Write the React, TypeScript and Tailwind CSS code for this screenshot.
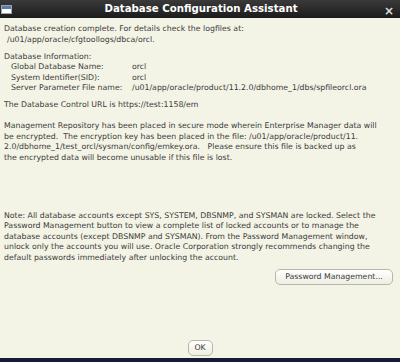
import React from "react";

const Line: React.FC<{ children: React.ReactNode; className?: string }> = ({
  children,
  className = "",
}) => (
  <div className={`h-[10.5px] leading-[10.5px] whitespace-pre ${className}`}>
    {children}
  </div>
);

const InfoRow: React.FC<{ label: string; value: string }> = ({ label, value }) => (
  <div className="flex h-[10.5px] leading-[10.5px] whitespace-pre">
    <span className="w-[128px] shrink-0 pl-[7px]">{label}</span>
    <span>{value}</span>
  </div>
);

const App: React.FC = () => {
  return (
    <div
      className="flex h-[362px] w-[400px] flex-col overflow-hidden bg-[#f4f4e6] text-[7.8px] text-[#3a3a3a]"
      style={{ fontFamily: '"DejaVu Sans", sans-serif' }}
    >
      {/* title bar */}
      <div className="relative flex h-[18px] shrink-0 items-center justify-center bg-gradient-to-b from-[#3a3a3a] to-[#1c1c1c]">
        <div className="absolute left-[1px] top-[5px] h-[9px] w-[11px] border border-[#9aa4b4] bg-white">
          <div className="h-[3px] bg-[#5a7bb0]" />
        </div>
        <span className="pl-[2px] text-[10.2px] font-bold text-white">
          Database Configuration Assistant
        </span>
        <span className="absolute right-[6px] top-[2px] text-[12px] font-bold text-[#ddd]">
          ×
        </span>
      </div>

      <div className="flex flex-1 flex-col px-[4px] pt-[6px]">
        <Line>Database creation complete. For details check the logfiles at:</Line>
        <Line className="pl-[3px]">/u01/app/oracle/cfgtoollogs/dbca/orcl.</Line>

        <div className="mt-[6.5px]">
          <Line>Database Information:</Line>
          <InfoRow label="Global Database Name:" value="orcl" />
          <InfoRow label="System Identifier(SID):" value="orcl" />
          <InfoRow
            label="Server Parameter File name:"
            value="/u01/app/oracle/product/11.2.0/dbhome_1/dbs/spfileorcl.ora"
          />
        </div>

        <Line className="mt-[6.5px]">The Database Control URL is https://test:1158/em</Line>

        <div className="mt-[10.5px]">
          <Line>Management Repository has been placed in secure mode wherein Enterprise Manager data will</Line>
          <Line>be encrypted.  The encryption key has been placed in the file: /u01/app/oracle/product/11.</Line>
          <Line>2.0/dbhome_1/test_orcl/sysman/config/emkey.ora.   Please ensure this file is backed up as</Line>
          <Line>the encrypted data will become unusable if this file is lost.</Line>
        </div>

        <div className="mt-[47.5px]">
          <Line>Note: All database accounts except SYS, SYSTEM, DBSNMP, and SYSMAN are locked. Select the</Line>
          <Line>Password Management button to view a complete list of locked accounts or to manage the</Line>
          <Line>database accounts (except DBSNMP and SYSMAN). From the Password Management window,</Line>
          <Line>unlock only the accounts you will use. Oracle Corporation strongly recommends changing the</Line>
          <Line>default passwords immediately after unlocking the account.</Line>
        </div>

        <div className="mt-[5.5px] flex justify-end pr-[3px]">
          <div className="flex h-[16px] w-[118px] shrink-0 items-center justify-center rounded-[5px] border border-[#b8b8a8] bg-gradient-to-b from-white to-[#eeeee4] whitespace-pre">
            Password Management...
          </div>
        </div>

        <div className="mt-auto mb-[2px] flex justify-center">
          <div className="flex h-[16px] w-[25px] shrink-0 items-center justify-center rounded-[5px] border border-[#b8b8a8] bg-gradient-to-b from-white to-[#eeeee4]">
            OK
          </div>
        </div>
      </div>
      <div className="h-[4px] shrink-0 bg-[#161a36]" />
    </div>
  );
};

export default App;
